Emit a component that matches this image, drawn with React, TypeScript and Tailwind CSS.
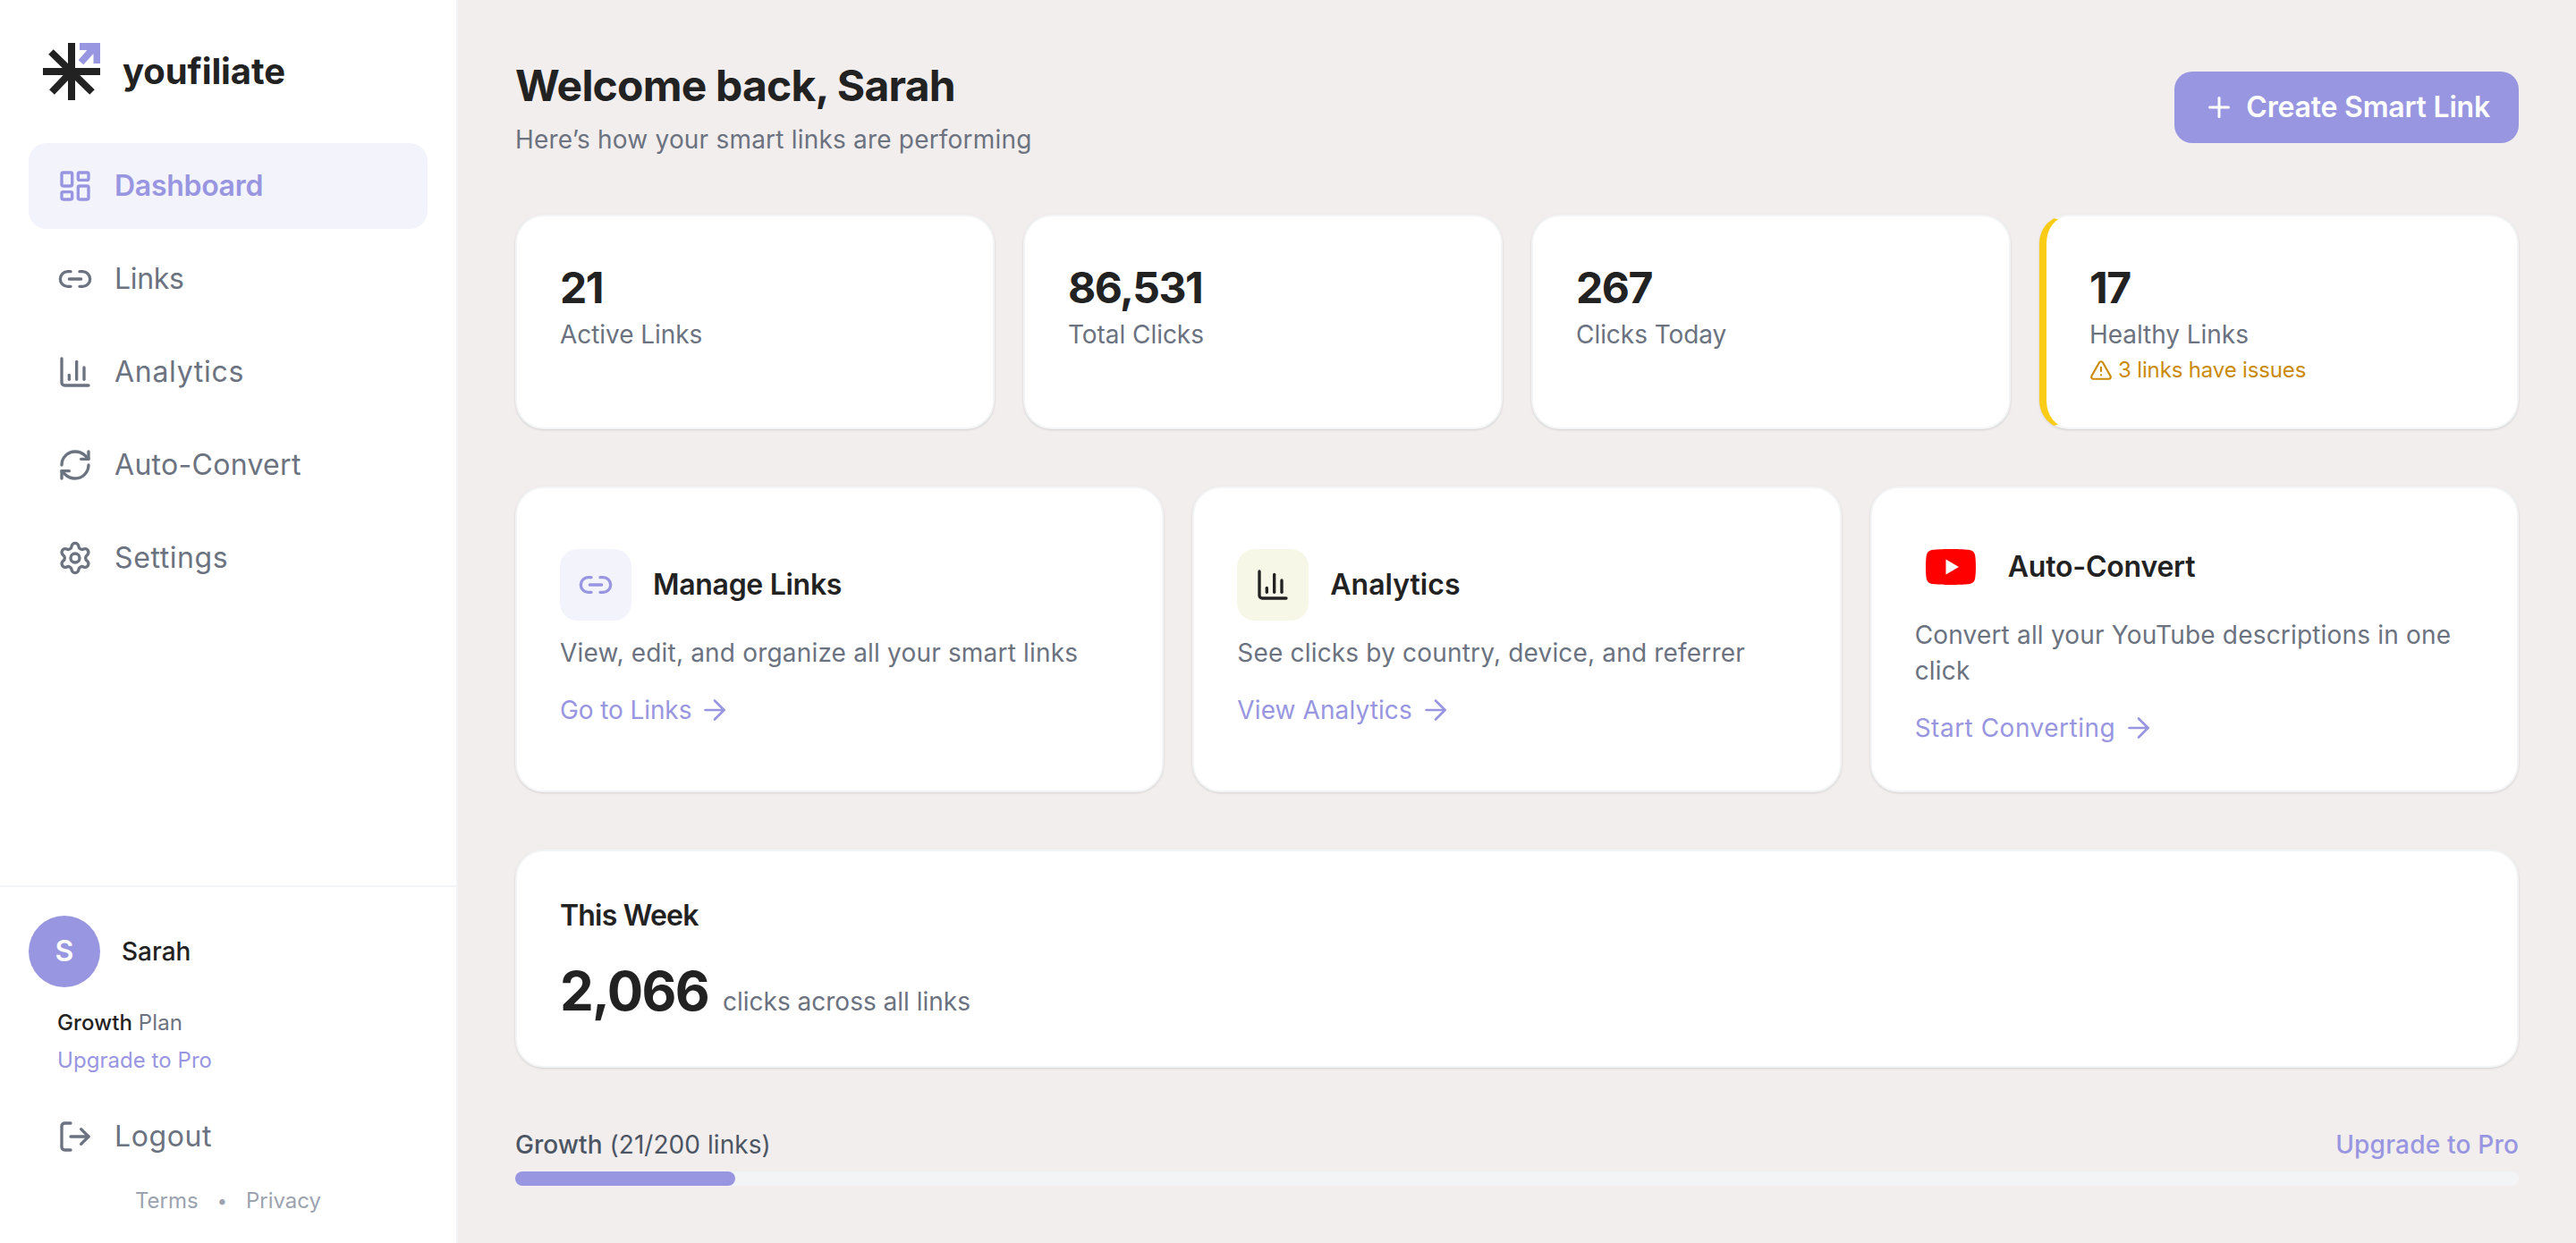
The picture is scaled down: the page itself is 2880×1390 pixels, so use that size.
import React from "react";
import { LayoutDashboard, Link2, BarChart3, RefreshCw, Settings, LogOut, Plus, ArrowRight, AlertTriangle, ChartColumn } from "lucide-react";

const F = { fontFamily: '"Inter", "Liberation Sans", sans-serif' };

function Logo() {
  return (
    <svg width="64" height="64" viewBox="0 0 64 64" className="shrink-0">
      <g stroke="#222222" strokeWidth="8" fill="none">
        <path d="M32 0V64" />
        <path d="M0 32H64" />
        <path d="M9 10L55 55" />
        <path d="M10 55L32 32" />
      </g>
      <path d="M41 0H64V23H56.500V12L45.300 24.300L39.700 19.300L49.300 8H41Z" fill="#9896e0" />
    </svg>
  );
}

function NavItem({ icon: Icon, label, active, track }: { icon: any; label: string; active?: boolean; track: string }) {
  return (
    <div className={active ? "flex h-24 items-center gap-6 rounded-[20px] bg-[#f3f3fc] px-8 text-[#9896e0]" : "flex h-24 items-center gap-6 rounded-[20px] px-8 text-[#6b7280]"}>
      <Icon size={40} strokeWidth={2} className="shrink-0" />
      <span className={(active ? "text-[32px] font-semibold " : "text-[32px] font-normal ") + track}>{label}</span>
    </div>
  );
}

function Stat({ value, label, warn }: { value: string; label: string; warn?: boolean }) {
  return (
    <div className={warn ? "rounded-[32px] border-2 border-l-8 border-[#f3f4f6] border-l-[#facc15] bg-white p-12 shadow-sm" : "rounded-[32px] border-2 border-[#f3f4f6] bg-white p-12 shadow-sm"}>
      <div className="text-[48px] font-bold leading-[64px] tracking-[-1.5px] text-[#222222]">{value}</div>
      <div className="text-[28px] leading-10 tracking-[-0.05px] text-[#6b7280]">{label}</div>
      {warn && (
        <div className="mt-1 flex items-center gap-1.5 text-[24px] leading-8 tracking-[-0.15px] text-[#ca8a04]">
          <AlertTriangle size={26} strokeWidth={2} />
          <span>3 links have issues</span>
        </div>
      )}
    </div>
  );
}

function Action({ icon, title, titleTrack, desc, link, linkTrack }: { icon: React.ReactNode; title: string; titleTrack: string; desc: string; link: string; linkTrack: string }) {
  return (
    <div className="flex flex-col justify-center rounded-[32px] border-2 border-[#f3f4f6] bg-white px-12 pb-[50px] pt-12 shadow-sm">
      <div className="flex items-center gap-6">
        {icon}
        <span className={"text-[32px] font-semibold text-[#222222] " + titleTrack}>{title}</span>
      </div>
      <p className="mt-4 text-[28px] leading-10 tracking-[0.18px] text-[#6b7280]">{desc}</p>
      <div className="mt-6 flex items-center gap-2 text-[28px] leading-10 text-[#9896e0]">
        <span className={linkTrack}>{link}</span>
        <ArrowRight size={36} strokeWidth={1.75} />
      </div>
    </div>
  );
}

function YouTube() {
  return (
    <div className="flex h-20 w-20 shrink-0 items-center justify-center">
      <svg width="56" height="40" viewBox="0 0 56 40">
        <path d="M55 6.200A7 7 0 0 0 50 1.200C45.700 0 28 0 28 0S10.300 0 6 1.200A7 7 0 0 0 1 6.200C0 10.600 0 20 0 20S0 29.400 1 33.800A7 7 0 0 0 6 38.800C10.300 40 28 40 28 40S45.700 40 50 38.800A7 7 0 0 0 55 33.800C56 29.400 56 20 56 20S56 10.600 55 6.200Z" fill="#ff0000" />
        <path d="M22.500 28.500L37 20L22.500 11.500Z" fill="#ffffff" />
      </svg>
    </div>
  );
}

export default function App() {
  return (
    <div style={F} className="flex h-[1390px] w-[2880px] overflow-hidden bg-[#f2eeee]">
      <aside className="flex w-[512px] shrink-0 flex-col border-r-2 border-[#f3f4f6] bg-white">
        <div className="flex items-center gap-[25px] p-12">
          <Logo />
          <span className="text-[40px] font-bold leading-none tracking-[-0.1px] text-[#222222]">youfiliate</span>
        </div>
        <nav className="flex flex-1 flex-col gap-2 px-8">
          <NavItem icon={LayoutDashboard} label="Dashboard" active track="tracking-[-0.3px]" />
          <NavItem icon={Link2} label="Links" track="tracking-[-0.3px]" />
          <NavItem icon={BarChart3} label="Analytics" track="tracking-[0.7px]" />
          <NavItem icon={RefreshCw} label="Auto-Convert" track="tracking-[0.3px]" />
          <NavItem icon={Settings} label="Settings" track="tracking-[0.6px]" />
        </nav>
        <div className="border-t-2 border-[#f3f4f6] px-8 pb-[31px] pt-8">
          <div className="flex items-center gap-6">
            <div className="flex h-20 w-20 items-center justify-center rounded-full bg-[#9896e0] text-[32px] font-semibold text-white">S</div>
            <span className="text-[28px] font-medium text-[#222222]">Sarah</span>
          </div>
          <div className="mt-6 pl-8 text-[24px] leading-8 tracking-[0.1px] text-[#6b7280]">
            <span className="font-medium text-[#222222]">Growth</span> Plan
          </div>
          <div className="mt-2.5 pl-8 text-[24px] leading-8 tracking-[0.05px] text-[#9896e0]">Upgrade to Pro</div>
          <div className="mt-[21px] flex h-24 items-center gap-6 px-8 text-[#6b7280]">
            <LogOut size={40} strokeWidth={2} className="shrink-0" />
            <span className="text-[32px] tracking-[0.6px]">Logout</span>
          </div>
          <div className="mt-2 flex items-center justify-center gap-[21px] text-[24px] leading-8 text-[#9ca3af]">
            <span>Terms</span>
            <span className="text-[20px]">•</span>
            <span>Privacy</span>
          </div>
        </div>
      </aside>
      <main className="flex-1 px-16 pt-16">
        <header className="mb-16 flex items-center justify-between">
          <div>
            <h1 className="text-[48px] font-bold leading-[64px] tracking-[-0.8px] text-[#222222]">Welcome back, Sarah</h1>
            <p className="mt-2 text-[28px] leading-10 tracking-[0.2px] text-[#6b7280]">Here’s how your smart links are performing</p>
          </div>
          <div className="flex h-20 items-center gap-3 rounded-[20px] bg-[#9896e0] px-8 text-white">
            <Plus size={36} strokeWidth={2} />
            <span className="text-[32px] font-semibold tracking-[-0.2px]">Create Smart Link</span>
          </div>
        </header>
        <section className="mb-16 grid grid-cols-4 gap-8">
          <Stat value="21" label="Active Links" />
          <Stat value="86,531" label="Total Clicks" />
          <Stat value="267" label="Clicks Today" />
          <Stat value="17" label="Healthy Links" warn />
        </section>
        <section className="mb-16 grid grid-cols-3 gap-8">
          <Action
            icon={<div className="flex h-20 w-20 shrink-0 items-center justify-center rounded-[20px] bg-[#f3f3fc] text-[#9896e0]"><Link2 size={40} /></div>}
            title="Manage Links"
            titleTrack="tracking-[-0.3px]"
            desc="View, edit, and organize all your smart links"
            link="Go to Links"
            linkTrack="tracking-[-0.1px]"
          />
          <Action
            icon={<div className="flex h-20 w-20 shrink-0 items-center justify-center rounded-[20px] bg-[#f6f7e6] text-[#222222]"><ChartColumn size={40} /></div>}
            title="Analytics"
            titleTrack="tracking-[0px]"
            desc="See clicks by country, device, and referrer"
            link="View Analytics"
            linkTrack="tracking-[0.1px]"
          />
          <Action
            icon={<YouTube />}
            title="Auto-Convert"
            titleTrack="tracking-[-0.2px]"
            desc="Convert all your YouTube descriptions in one click"
            link="Start Converting"
            linkTrack="tracking-[0.5px]"
          />
        </section>
        <section className="mb-16 rounded-[32px] border-2 border-[#f3f4f6] bg-white p-12 shadow-sm">
          <div className="text-[32px] font-semibold leading-[48px] tracking-[-0.8px] text-[#222222]">This Week</div>
          <div className="mt-6 flex items-baseline gap-4">
            <span className="text-[60px] font-bold leading-[72px] tracking-[-1.7px] text-[#222222]">2,066</span>
            <span className="text-[28px] tracking-[0px] text-[#6b7280]">clicks across all links</span>
          </div>
        </section>
        <section>
          <div className="mb-2.5 flex items-center justify-between pt-0.5 text-[28px] leading-10">
            <div className="tracking-[0.05px] text-[#4b5563]"><span className="font-medium">Growth</span> (21/200 links)</div>
            <div className="font-medium tracking-[0.2px] text-[#9896e0]">Upgrade to Pro</div>
          </div>
          <div className="h-4 rounded-lg bg-[#f3f4f6]">
            <div className="h-full rounded-lg bg-[#9896e0]" style={{ width: "11%" }} />
          </div>
        </section>
      </main>
    </div>
  );
}
